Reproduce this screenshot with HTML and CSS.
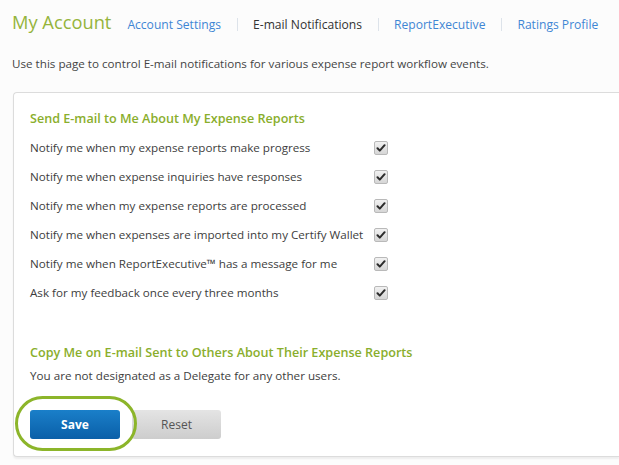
FILE: index.html
```html
<!DOCTYPE html>
<html>
<head>
<meta charset="utf-8">
<link rel="stylesheet" href="styles.css">
</head>
<body>
<div class="page">
  <header class="top">
    <h1 class="title">My Account</h1>
    <nav class="tabs">
      <a class="tab link">Account Settings</a>
      <span class="sep"></span>
      <a class="tab current">E-mail Notifications</a>
      <span class="sep"></span>
      <a class="tab link">ReportExecutive</a>
      <span class="sep"></span>
      <a class="tab link">Ratings Profile</a>
    </nav>
  </header>
  <p class="intro">Use this page to control E-mail notifications for various expense report workflow events.</p>
  <section class="card">
    <h2 class="heading">Send E-mail to Me About My Expense Reports</h2>
    <ul class="opts">
      <li class="opt"><span class="label">Notify me when my expense reports make progress</span><span class="cb"><svg viewBox="0 0 10 10"><path d="M1.5 5.2 L3.8 7.6 L8.6 2.2" /></svg></span></li>
      <li class="opt"><span class="label">Notify me when expense inquiries have responses</span><span class="cb"><svg viewBox="0 0 10 10"><path d="M1.5 5.2 L3.8 7.6 L8.6 2.2" /></svg></span></li>
      <li class="opt"><span class="label">Notify me when my expense reports are processed</span><span class="cb"><svg viewBox="0 0 10 10"><path d="M1.5 5.2 L3.8 7.6 L8.6 2.2" /></svg></span></li>
      <li class="opt"><span class="label">Notify me when expenses are imported into my Certify Wallet</span><span class="cb"><svg viewBox="0 0 10 10"><path d="M1.5 5.2 L3.8 7.6 L8.6 2.2" /></svg></span></li>
      <li class="opt"><span class="label">Notify me when ReportExecutive™ has a message for me</span><span class="cb"><svg viewBox="0 0 10 10"><path d="M1.5 5.2 L3.8 7.6 L8.6 2.2" /></svg></span></li>
      <li class="opt"><span class="label">Ask for my feedback once every three months</span><span class="cb"><svg viewBox="0 0 10 10"><path d="M1.5 5.2 L3.8 7.6 L8.6 2.2" /></svg></span></li>
    </ul>
    <h2 class="heading second">Copy Me on E-mail Sent to Others About Their Expense Reports</h2>
    <p class="note">You are not designated as a Delegate for any other users.</p>
    <div class="actions">
      <button class="btn save">Save</button>
      <button class="btn reset">Reset</button>
      <span class="highlight"></span>
    </div>
  </section>
</div>
</body>
</html>
```
FILE: styles.css
```css
html, body {
  margin: 0;
  padding: 0;
  background: #fcfcfc;
}
body {
  font-family: "Open Sans", "Liberation Sans", sans-serif;
  color: #3d3d3d;
  font-size: 11.65px;
  width: 619px;
  height: 465px;
  overflow: hidden;
}
.page {
  padding: 9px 0 0 12px;
}
.top {
  display: flex;
  align-items: baseline;
  white-space: nowrap;
}
.title {
  margin: 0;
  font-size: 18.3px;
  font-weight: 400;
  color: #95b43b;
  line-height: 26px;
  flex-shrink: 0;
}
.tabs {
  display: flex;
  align-items: center;
  margin-left: 16px;
  font-size: 12.1px;
}
.tab {
  white-space: nowrap;
}
.link {
  color: #3f86d4;
}
.current {
  color: #333;
}
.sep {
  width: 1px;
  height: 13px;
  background: #dde3ea;
  margin: 0 15.5px;
}
.intro {
  margin: 20px 0 0 0;
  line-height: 17px;
  color: #444;
}
.card {
  margin-top: 20px;
  margin-left: 1px;
  width: 606px;
  height: 365px;
  box-sizing: border-box;
  background: #fff;
  border: 1px solid #dcdcdc;
  border-right: none;
  border-radius: 4px 0 0 4px;
  box-shadow: 0 2px 2px rgba(0,0,0,0.06);
  padding: 17px 0 0 16px;
}
.heading {
  margin: 0;
  font-size: 12.6px;
  font-weight: 600;
  color: #8aae2c;
  line-height: 18px;
}
.opts {
  list-style: none;
  margin: 5px 0 0 0;
  padding: 0;
}
.opt {
  display: flex;
  align-items: center;
  height: 29px;
}
.label {
  width: 344px;
  white-space: nowrap;
  color: #3d3d3d;
}
.cb {
  width: 12px;
  height: 12px;
  border: 1px solid #b9b9b9;
  border-radius: 2px;
  background: linear-gradient(#f1f1f1, #d6d6d6);
  display: flex;
  align-items: center;
  justify-content: center;
}
.cb svg {
  width: 10px;
  height: 10px;
}
.cb path {
  fill: none;
  stroke: #2b2b2b;
  stroke-width: 2;
  stroke-linecap: round;
  stroke-linejoin: round;
}
.second {
  margin-top: 37px;
}
.note {
  margin: 5px 0 0 0;
  line-height: 17px;
  color: #3d3d3d;
}
.actions {
  position: relative;
  display: flex;
  gap: 12px;
  margin-top: 26px;
}
.btn {
  width: 90px;
  height: 29px;
  border: none;
  border-radius: 3px;
  font-family: "Open Sans", "Liberation Sans", sans-serif;
  font-size: 12px;
  padding: 0;
}
.save {
  background: linear-gradient(#1a7fc9, #0a5fa8);
  color: #fff;
  font-weight: 700;
}
.reset {
  background: linear-gradient(#e4e4e4, #cdcdcd);
  color: #555;
  width: 89px;
}
.highlight {
  position: absolute;
  left: -15px;
  top: -14px;
  width: 116px;
  height: 49px;
  border: 3px solid #8cb52a;
  border-radius: 28px;
  pointer-events: none;
}
```
